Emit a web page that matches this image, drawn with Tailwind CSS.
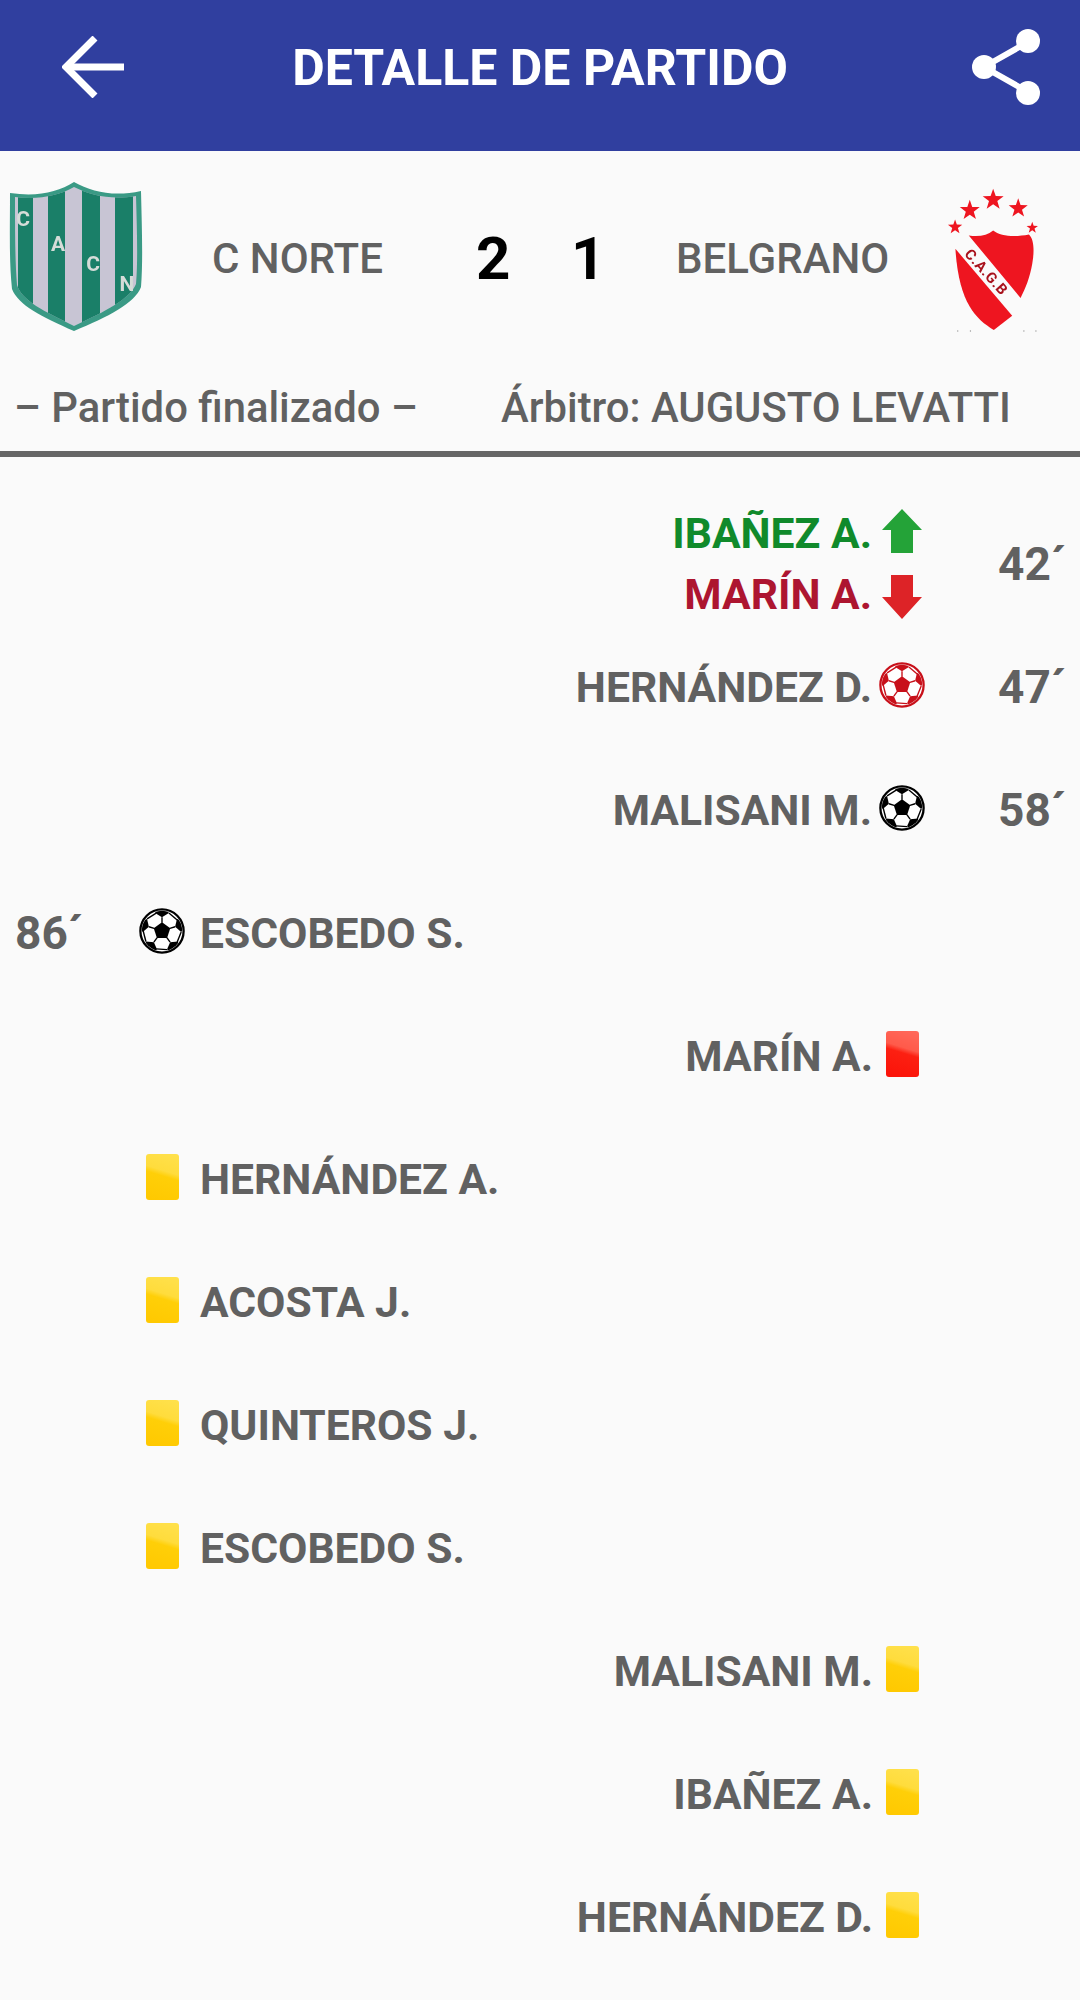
<!DOCTYPE html>
<html lang="es">

<head>
  <meta charset="UTF-8">
  <title>Detalle de partido</title>
  <script src="https://cdn.jsdelivr.net/npm/@tailwindcss/browser@4"></script>
</head>

<body class="bg-[#fafafa] font-['Roboto',sans-serif] text-[#616161] w-[1080px] h-[2000px] overflow-hidden">
  <!-- header -->
  <header class="h-[151px] bg-[#303f9f] flex items-start pl-[62px] pr-[40px] text-white">
    <svg class="w-[62px] h-[62px] mt-[36px]" viewBox="0 0 62 62" fill="none" stroke="currentColor" stroke-width="7">
      <path d="M62 31H6" />
      <path d="M33 2 4 31 33 60" />
    </svg>
    <h1 class="flex-1 mr-[16px] text-center mt-[39px] text-[50px] leading-[58px] font-bold">DETALLE DE PARTIDO</h1>
    <svg class="w-[68px] h-[76px] mt-[29px]" viewBox="0 0 68 76" fill="none">
      <path d="M56 13 12 38 56 63" stroke="white" stroke-width="6" />
      <circle cx="56" cy="12" r="12" fill="white" />
      <circle cx="12" cy="38" r="12" fill="white" />
      <circle cx="56" cy="64" r="12" fill="white" />
    </svg>
  </header>

  <!-- teams -->
  <section class="h-[212px] flex items-center font-medium text-[42px]">
    <svg class="w-[136px] h-[152px] ml-[8px] blur-[0.7px]" viewBox="0 0 136 152">
      <defs>
        <clipPath id="shieldInner">
          <path d="M7 16C30 19 50 15 66 6 84 15 104 19 128 15 129 50 130 80 128 103 122 118 98 130 66 145 36 130 14 120 9 104 7 80 7 50 7 16Z" />
        </clipPath>
      </defs>
      <path d="M2 12C30 16 50 11 66 1 84 11 106 16 133 10 134 50 135 80 133 106 127 122 100 136 66 150 34 136 10 124 4 108 1 80 2 50 2 12Z" fill="#3a9a85" />
      <g clip-path="url(#shieldInner)">
        <rect x="0" y="0" width="136" height="152" fill="#c8c5d4" />
        <rect x="10" y="0" width="15" height="152" fill="#1a7f68" />
        <rect x="40" y="0" width="17" height="152" fill="#1a7f68" />
        <rect x="74" y="0" width="18" height="152" fill="#1a7f68" />
        <rect x="107" y="0" width="18" height="152" fill="#1a7f68" />
      </g>
      <g fill="#d5dcd8" font-size="21" font-weight="700" font-family="Roboto, sans-serif" text-anchor="middle">
        <text x="15" y="45">C</text>
        <text x="50" y="70">A</text>
        <text x="85" y="90">C</text>
        <text x="119" y="110">N</text>
      </g>
    </svg>
    <span class="ml-[68px] w-[264px] mt-[3px]">C NORTE</span>
    <b class="w-[95px] mt-[3px] text-black text-[60px] font-bold">2</b>
    <b class="w-[105px] mt-[3px] text-black text-[60px] font-bold">1</b>
    <span class="w-[271px] mt-[3px]">BELGRANO</span>
    <svg class="w-[97px] h-[147px] mt-[6px] blur-[0.4px]" viewBox="80 50 290 440" fill="#ee1520">
      <defs>
        <polygon id="star" points="0,-30 7,-10 28.5,-9.3 11.3,3.8 17.6,24.3 0,12.5 -17.6,24.3 -11.3,3.8 -28.5,-9.3 -7,-10" />
      </defs>
      <use href="#star" transform="translate(218 88) scale(1.1)" />
      <use href="#star" transform="translate(148 120) scale(1.05)" />
      <use href="#star" transform="translate(293 114) scale(1)" />
      <use href="#star" transform="translate(104 170) scale(0.75)" />
      <use href="#star" transform="translate(335 172) scale(0.6)" />
      <path d="M145 195C175 200 200 195 218 180 240 198 285 200 325 192 340 205 342 240 335 280 328 320 315 355 300 382Z" />
      <path d="M105 235 275 435 220 478C165 445 115 395 105 235Z" />
      <g fill="#a8121c" font-size="44" font-weight="700" font-family="Roboto, sans-serif">
        <text x="130" y="252" transform="rotate(48 130 252)" letter-spacing="2">C.A.G.B</text>
      </g>
      <g fill="#999999">
        <circle cx="112" cy="481" r="2" />
        <circle cx="150" cy="481" r="2" />
        <circle cx="310" cy="481" r="2" />
        <circle cx="346" cy="481" r="2" />
      </g>
    </svg>
  </section>

  <!-- status -->
  <section class="h-[94px] flex items-start pl-[14px] pt-[21px] font-medium text-[41.8px] leading-[47px] border-b-[6px] border-[#666666]">
    <span class="w-[487px]">– Partido finalizado –</span>
    <span>Árbitro: AUGUSTO LEVATTI</span>
  </section>

  <!-- events -->
  <main class="text-[42.6px] font-bold">
    <div class="h-[176px] pt-[46px] flex justify-end">
      <div class="flex flex-col items-end">
        <div class="h-[61px] flex items-center text-[#108a2b]">
          IBAÑEZ A.
          <svg class="w-[40px] h-[44px] ml-[10px] mr-[3px] mb-[6px]" viewBox="0 0 40 44" fill="#24a338">
            <path d="M20 0 40 21H31V44H9V21H0Z" />
          </svg>
        </div>
        <div class="h-[61px] flex items-center text-[#ad1530]">
          MARÍN A.
          <svg class="w-[40px] h-[44px] ml-[10px] mr-[3px] mt-[4px]" viewBox="0 0 40 44" fill="#dd2327">
            <path d="M20 44 40 22H31V0H9V22H0Z" />
          </svg>
        </div>
      </div>
      <div class="w-[155px] h-[122px] flex items-center pl-[73px] text-[46px]">42´</div>
    </div>

    <div class="h-[123px] pt-[2px] flex items-center justify-end mt-[-8px]">
      HERNÁNDEZ D.
      <svg class="w-[46px] h-[46px] ml-[7px] mb-[5px] text-[#c8101a]" viewBox="0 0 100 100">
        <defs>
          <clipPath id="ballClip">
            <circle cx="50" cy="50" r="44" />
          </clipPath>
          <g id="ballPart">
            <path d="M50 32V20" stroke="currentColor" stroke-width="3" />
            <path d="M35 11 50 20 65 11 58 0H42Z" fill="currentColor" />
            <path d="M65 11 83 26" stroke="currentColor" stroke-width="3" />
          </g>
          <symbol id="ball" viewBox="0 0 100 100">
            <circle cx="50" cy="50" r="47" fill="white" stroke="currentColor" stroke-width="5" />
            <path d="M50 31 68 44 61 65H39L32 44Z" fill="currentColor" />
            <g clip-path="url(#ballClip)">
              <use href="#ballPart" />
              <use href="#ballPart" transform="rotate(72 50 50)" />
              <use href="#ballPart" transform="rotate(144 50 50)" />
              <use href="#ballPart" transform="rotate(216 50 50)" />
              <use href="#ballPart" transform="rotate(288 50 50)" />
            </g>
          </symbol>
        </defs>
        <use href="#ball" />
      </svg>
      <div class="w-[155px] pl-[73px] text-[46px]">47´</div>
    </div>

    <div class="h-[123px] pt-[2px] flex items-center justify-end">
      MALISANI M.
      <svg class="w-[46px] h-[46px] ml-[7px] mb-[5px] text-black" viewBox="0 0 100 100"><use href="#ball" /></svg>
      <div class="w-[155px] pl-[73px] text-[46px]">58´</div>
    </div>

    <div class="h-[123px] pt-[2px] flex items-center pl-[15px]">
      <div class="w-[124px] text-[46px]">86´</div>
      <svg class="w-[46px] h-[46px] mr-[15px] mb-[5px] text-black" viewBox="0 0 100 100"><use href="#ball" /></svg>
      ESCOBEDO S.
    </div>

    <div class="h-[123px] pt-[2px] flex items-center justify-end pr-[161px]">
      MARÍN A.
      <div class="w-[33px] h-[46px] ml-[13px] mb-[5px] rounded-[3px] blur-[0.5px] bg-[linear-gradient(197deg,#ff6a5c_0%,#ff5a4a_38%,#fc2012_48%,#fb1208_100%)]"></div>
    </div>

    <div class="h-[123px] pt-[2px] flex items-center pl-[146px]">
      <div class="w-[33px] h-[46px] mr-[21px] mb-[5px] rounded-[3px] blur-[0.5px] bg-[linear-gradient(197deg,#ffe14d_0%,#ffdc3c_38%,#ffcf08_48%,#ffc800_100%)]"></div>
      HERNÁNDEZ A.
    </div>

    <div class="h-[123px] pt-[2px] flex items-center pl-[146px]">
      <div class="w-[33px] h-[46px] mr-[21px] mb-[5px] rounded-[3px] blur-[0.5px] bg-[linear-gradient(197deg,#ffe14d_0%,#ffdc3c_38%,#ffcf08_48%,#ffc800_100%)]"></div>
      ACOSTA J.
    </div>

    <div class="h-[123px] pt-[2px] flex items-center pl-[146px]">
      <div class="w-[33px] h-[46px] mr-[21px] mb-[5px] rounded-[3px] blur-[0.5px] bg-[linear-gradient(197deg,#ffe14d_0%,#ffdc3c_38%,#ffcf08_48%,#ffc800_100%)]"></div>
      QUINTEROS J.
    </div>

    <div class="h-[123px] pt-[2px] flex items-center pl-[146px]">
      <div class="w-[33px] h-[46px] mr-[21px] mb-[5px] rounded-[3px] blur-[0.5px] bg-[linear-gradient(197deg,#ffe14d_0%,#ffdc3c_38%,#ffcf08_48%,#ffc800_100%)]"></div>
      ESCOBEDO S.
    </div>

    <div class="h-[123px] pt-[2px] flex items-center justify-end pr-[161px]">
      MALISANI M.
      <div class="w-[33px] h-[46px] ml-[13px] mb-[5px] rounded-[3px] blur-[0.5px] bg-[linear-gradient(197deg,#ffe14d_0%,#ffdc3c_38%,#ffcf08_48%,#ffc800_100%)]"></div>
    </div>

    <div class="h-[123px] pt-[2px] flex items-center justify-end pr-[161px]">
      IBAÑEZ A.
      <div class="w-[33px] h-[46px] ml-[13px] mb-[5px] rounded-[3px] blur-[0.5px] bg-[linear-gradient(197deg,#ffe14d_0%,#ffdc3c_38%,#ffcf08_48%,#ffc800_100%)]"></div>
    </div>

    <div class="h-[123px] pt-[2px] flex items-center justify-end pr-[161px]">
      HERNÁNDEZ D.
      <div class="w-[33px] h-[46px] ml-[13px] mb-[5px] rounded-[3px] blur-[0.5px] bg-[linear-gradient(197deg,#ffe14d_0%,#ffdc3c_38%,#ffcf08_48%,#ffc800_100%)]"></div>
    </div>
  </main>
</body>

</html>
